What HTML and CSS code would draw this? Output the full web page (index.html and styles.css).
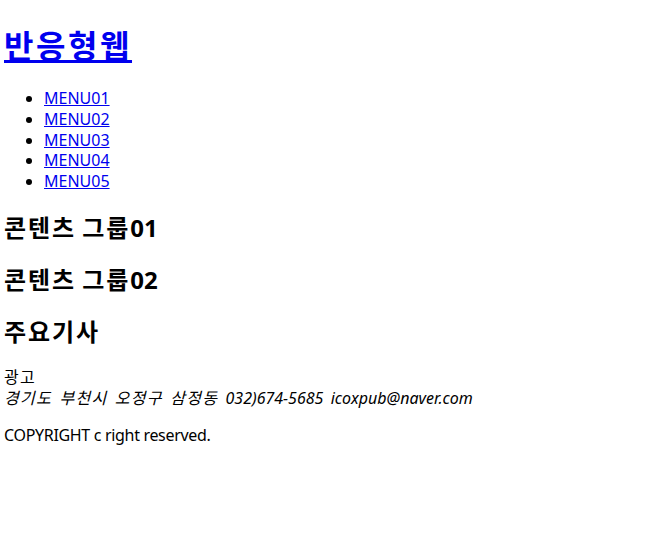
FILE: index.html
```html
<!DOCTYPE html>
<html lang="ko">
<head>
<meta charset="utf-8">
<title>반응형웹</title>
<link rel="stylesheet" href="styles.css">
</head>
<body>
<header class="header">
  <h1 class="logo"><a href="#"><span class="ko">반응형웹</span></a></h1>
  <nav class="gnb">
    <ul class="menu">
      <li><a href="#">MENU01</a></li>
      <li><a href="#">MENU02</a></li>
      <li><a href="#">MENU03</a></li>
      <li><a href="#">MENU04</a></li>
      <li><a href="#">MENU05</a></li>
    </ul>
  </nav>
</header>
<section class="content">
  <h2 class="sec-title"><span class="ko">콘텐츠</span> <span class="ko">그룹</span>01</h2>
  <h2 class="sec-title"><span class="ko">콘텐츠</span> <span class="ko">그룹</span>02</h2>
  <h2 class="sec-title"><span class="ko">주요기사</span></h2>
  <div class="ad"><span class="ko">광고</span></div>
</section>
<footer class="footer">
  <address class="addr"><span class="ko">경기도</span> <span class="ko">부천시</span> <span class="ko">오정구</span> <span class="ko">삼정동</span> 032)674-5685 icoxpub@naver.com</address>
  <p class="copy">COPYRIGHT c right reserved.</p>
</footer>
</body>
</html>
```

FILE: styles.css
```css
html, body {
  background: #ffffff;
}
body {
  margin: 4px;
  font-family: "Noto Sans", "Noto Sans CJK KR", sans-serif;
  font-size: 16px;
  line-height: 1.3;
  color: #000000;
}
a {
  color: #0000ee;
}
.ko {
  font-family: "Noto Sans CJK KR", sans-serif;
  letter-spacing: 0.08em;
  line-height: 1;
}
.logo {
  font-size: 32px;
  font-weight: bold;
  margin: 21px 0 21.44px;
  line-height: 1.3;
}
.menu {
  margin: 16px 0;
  padding-left: 40px;
}
.sec-title {
  font-size: 24px;
  font-weight: bold;
  margin: 19.92px 0;
  line-height: 1.33;
}
.addr {
  font-style: italic;
  word-spacing: 0.2em;
}
.copy {
  margin: 16px 0;
  letter-spacing: -0.02em;
}
```
